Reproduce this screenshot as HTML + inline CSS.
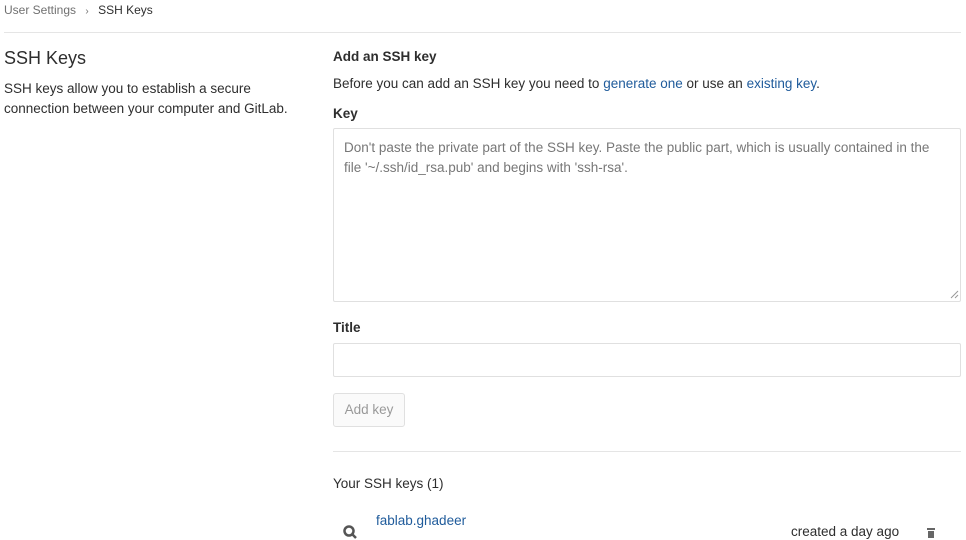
<!DOCTYPE html>
<html><head><meta charset="utf-8"><style>
*{box-sizing:border-box;margin:0;padding:0}
body{width:966px;height:534px;overflow:hidden;background:#fff;font-family:"Liberation Sans",sans-serif;color:#2e2e2e;font-size:14px;position:relative}
.a{position:absolute;white-space:nowrap}
a{color:#1f5b9b;text-decoration:none}
</style></head><body>
<div class="a" style="left:4px;top:3px;font-size:12px;color:#707070">User Settings <span style="margin:0 6px;font-size:10px">›</span> <span style="color:#2e2e2e">SSH Keys</span></div>
<div class="a" style="left:4px;top:32px;width:957px;border-top:1px solid #e5e5e5"></div>
<div class="a" style="left:4px;top:48px;font-size:18px;color:#2e2e2e">SSH Keys</div>
<div class="a" style="left:4px;top:79px;font-size:13.5px;line-height:20px">SSH keys allow you to establish a secure<br>connection between your computer and GitLab.</div>
<div class="a" style="left:333px;top:49px;font-weight:bold;font-size:13.5px">Add an SSH key</div>
<div class="a" style="left:333px;top:76px;font-size:13.5px">Before you can add an SSH key you need to <a>generate one</a> or use an <a>existing key</a>.</div>
<div class="a" style="left:333px;top:106px;font-weight:bold;font-size:13.5px">Key</div>
<div class="a" style="left:333px;top:128px;width:628px;height:174px;border:1px solid #e0e0e0;border-radius:2px;padding:9px 10px;font-size:13.5px;line-height:20px;color:#777;white-space:normal">Don't paste the private part of the SSH key. Paste the public part, which is usually contained in the file '~/.ssh/id_rsa.pub' and begins with 'ssh-rsa'.</div>
<svg class="a" style="left:950px;top:290px" width="9" height="9" viewBox="0 0 9 9"><path d="M1 8L8 1M5 8L8 5" stroke="#999" stroke-width="1"/></svg>
<div class="a" style="left:333px;top:320px;font-weight:bold;font-size:13.5px">Title</div>
<div class="a" style="left:333px;top:343px;width:628px;height:34px;border:1px solid #e0e0e0;border-radius:2px"></div>
<div class="a" style="left:333px;top:393px;width:72px;height:34px;border:1px solid #e0e0e0;border-radius:3px;background:#fafafa;color:#999;font-size:13.5px;line-height:32px;text-align:center">Add key</div>
<div class="a" style="left:333px;top:451px;width:628px;border-top:1px solid #e5e5e5"></div>
<div class="a" style="left:333px;top:476px;font-size:13.5px">Your SSH keys (1)</div>
<svg class="a" style="left:342px;top:524px" width="20" height="16" viewBox="0 0 20 16"><circle cx="7" cy="7" r="4.5" fill="none" stroke="#555" stroke-width="2.5"/><path d="M10 10l4 4" stroke="#555" stroke-width="2.5"/></svg>
<div class="a" style="left:376px;top:513px;font-size:13.5px"><a>fablab.ghadeer</a></div>
<div class="a" style="left:791px;top:524px;font-size:13.5px">created a day ago</div>
<svg class="a" style="left:925px;top:528px" width="12" height="10" viewBox="0 0 12 10"><rect x="2" y="0" width="8" height="2" fill="#666"/><rect x="3" y="3" width="6" height="7" fill="#666"/></svg>
</body></html>
